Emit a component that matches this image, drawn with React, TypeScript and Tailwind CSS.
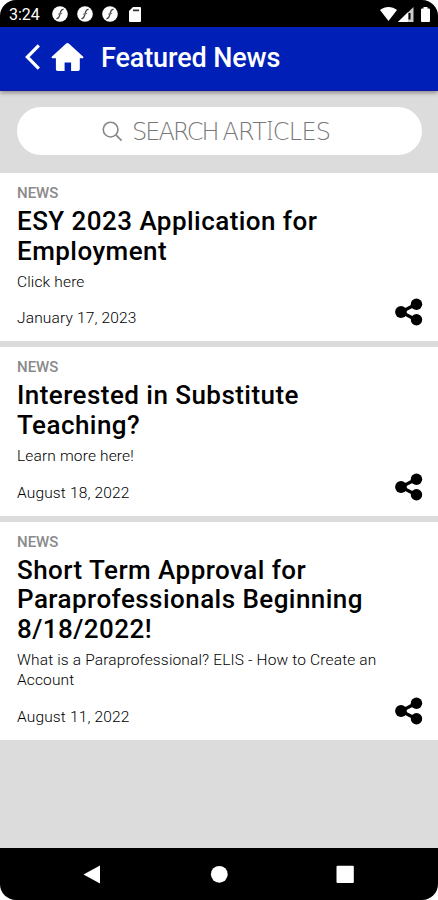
import React from "react";

type Article = {
  id: number;
  category: string;
  title: string[];
  summary: string[];
  date: string;
};

const articles: Article[] = [
  {
    id: 1,
    category: "NEWS",
    title: ["ESY 2023 Application for", "Employment"],
    summary: ["Click here"],
    date: "January 17, 2023",
  },
  {
    id: 2,
    category: "NEWS",
    title: ["Interested in Substitute", "Teaching?"],
    summary: ["Learn more here!"],
    date: "August 18, 2022",
  },
  {
    id: 3,
    category: "NEWS",
    title: ["Short Term Approval for", "Paraprofessionals Beginning", "8/18/2022!"],
    summary: ["What is a Paraprofessional? ELIS - How to Create an", "Account"],
    date: "August 11, 2022",
  },
];

function AppBadge() {
  return (
    <svg className="w-[16px] h-[16px]" viewBox="0 0 16 16">
      <circle cx="8" cy="8" r="7.8" fill="#fff" />
      <path d="M11.600 3.400C8.800 3 8.800 5 8 8s-1 5-3.600 4.600" fill="none" stroke="#444" strokeWidth="1.300" />
      <path d="M6 8.200l4.200-.8" stroke="#777" strokeWidth="1" />
    </svg>
  );
}

function StatusBar() {
  return (
    <div className="h-[27px] shrink-0 bg-black flex items-center text-white pl-[9px] pr-[8px] pt-[1px]">
      <span className="w-[43px] text-[16px] leading-none pt-[1px]">3:24</span>
      <div className="flex items-center gap-[9px]">
        <AppBadge />
        <AppBadge />
        <AppBadge />
        <svg className="w-[12px] h-[15px] ml-[2px]" viewBox="0 0 12 15">
          <path d="M4 0h7a1 1 0 0 1 1 1v13a1 1 0 0 1-1 1H1a1 1 0 0 1-1-1V4z" fill="#fff" />
          <path d="M4 3.400h6" stroke="#333" strokeWidth="1.600" />
        </svg>
      </div>
      <div className="ml-auto flex items-center">
        <svg className="w-[17px] h-[14px]" viewBox="0 0 17 14">
          <path d="M0 3C5-1 12-1 17 3L8.500 14z" fill="#fff" />
        </svg>
        <svg className="w-[16px] h-[15px] ml-[1px]" viewBox="0 0 16 15">
          <path d="M0 15L15.500 0v15z" fill="#ccc" />
          <path d="M0 15L10 5.300V15z" fill="#fff" />
          <path d="M11.500 6v6.500" stroke="#000" strokeWidth="2" />
        </svg>
        <svg className="w-[9px] h-[15px] ml-[7px]" viewBox="0 0 9 15">
          <path d="M2.500 0h4v1.500H8a1 1 0 0 1 1 1V14a1 1 0 0 1-1 1H1a1 1 0 0 1-1-1V2.500a1 1 0 0 1 1-1h1.500z" fill="#fff" />
        </svg>
      </div>
    </div>
  );
}

function Header() {
  return (
    <header className="relative h-[63.500px] shrink-0 bg-[#001fb7] border-b border-[#1717a0] shadow-[0_2px_4px_rgba(0,0,0,0.35)] flex items-center text-white pl-[25px] pb-[3px]">
      <button aria-label="Back">
        <svg className="w-[15px] h-[26px]" viewBox="0 0 15 26">
          <path d="M12.700 2.500L2.300 13l10.400 10.500" fill="none" stroke="#fff" strokeWidth="3.200" strokeLinecap="square" />
        </svg>
      </button>
      <button aria-label="Home" className="ml-[11px]">
        <svg className="w-[33px] h-[28px]" viewBox="0 0 33 28">
          <path
            d="M15.200.600a2 2 0 0 1 2.600 0L32 13.400c.8.700.4 1.900-.7 1.900h-2.500v10.900a1.700 1.700 0 0 1-1.700 1.700h-7v-8.400h-6.500v8.400h-7a1.700 1.700 0 0 1-1.700-1.700V15.300H1.700c-1.100 0-1.500-1.200-.7-1.900z"
            fill="#fff"
          />
        </svg>
      </button>
      <h1 className="ml-[17px] pt-[4px] text-[27px] leading-none font-medium tracking-[-0.130px] whitespace-nowrap">Featured News</h1>
    </header>
  );
}

function SearchBox() {
  return (
    <div className="h-[82.500px] shrink-0 px-[17px] pt-[16.500px]">
      <div className="w-[405px] h-[48px] rounded-full bg-white flex items-center text-[#777] pl-[85px]">
        <svg className="w-[21px] h-[21px]" viewBox="0 0 22 22">
          <circle cx="9" cy="9" r="7.700" fill="none" stroke="#888" strokeWidth="1.700" />
          <path d="M14.500 14.500L20.500 20.500" stroke="#888" strokeWidth="1.900" />
        </svg>
        <span className="ml-[9px] -mt-[1px] font-['DejaVu_Sans',sans-serif] font-extralight text-[24px] leading-none tracking-[-1.900px] [word-spacing:-1px] whitespace-nowrap">
          SEARCH{" "}
          <span className="tracking-[-0.750px]">
            ART<span className="font-['Noto_Sans',sans-serif] text-[25px] leading-none">I</span>CLES
          </span>
        </span>
      </div>
    </div>
  );
}

function ShareIcon() {
  return (
    <svg className="w-[28px] h-[28px]" viewBox="0 0 28 28">
      <path d="M21.500 6L6 14l15.500 8" fill="none" stroke="#000" strokeWidth="3.200" />
      <circle cx="21.500" cy="6.200" r="5.700" />
      <circle cx="6" cy="14" r="5.900" />
      <circle cx="21.500" cy="21.700" r="5.700" />
    </svg>
  );
}

function ArticleCard({ article }: { article: Article }) {
  return (
    <article className="bg-white pl-[17px] pr-[15px] pt-[11px] pb-[13px]">
      <p className="text-[15px] leading-[18px] font-medium text-[#8a8a8a]">{article.category}</p>
      <h2 className="mt-[5px] text-[26px] leading-[29.500px] font-medium tracking-[0.450px] text-black whitespace-nowrap">
        {article.title.map((line) => (
          <span key={line} className="block">{line}</span>
        ))}
      </h2>
      <p className="mt-[5.500px] text-[15.500px] leading-[20.300px] font-light tracking-[0.150px] text-black whitespace-nowrap">
        {article.summary.map((line) => (
          <span key={line} className="block">{line}</span>
        ))}
      </p>
      <div className="flex justify-between items-end mt-[6.500px]">
        <time className="text-[15.500px] leading-[20px] font-light tracking-[0.150px] text-black">{article.date}</time>
        <button aria-label="Share" className="mb-[2px]">
          <ShareIcon />
        </button>
      </div>
    </article>
  );
}

function NavBar() {
  return (
    <nav className="h-[52.500px] mt-auto shrink-0 bg-black">
      <svg className="w-full h-full" viewBox="0 0 438 52.5">
        <path d="M83.500 26.500L100 17.500v18z" fill="#fff" />
        <circle cx="219.300" cy="26.300" r="8.400" fill="#fff" />
        <rect x="336.500" y="17.800" width="17.300" height="17.300" rx="1" fill="#fff" />
      </svg>
    </nav>
  );
}

export default function App() {
  return (
    <div className="w-[438px] h-[900px] bg-white">
      <div className="w-full h-full flex flex-col overflow-hidden rounded-[16px] bg-[#dcdcdc] font-[Roboto,sans-serif]">
        <StatusBar />
        <Header />
        <SearchBox />
        <main className="flex flex-col gap-[6px]">
          {articles.map((article) => (
            <ArticleCard key={article.id} article={article} />
          ))}
        </main>
        <NavBar />
      </div>
    </div>
  );
}
